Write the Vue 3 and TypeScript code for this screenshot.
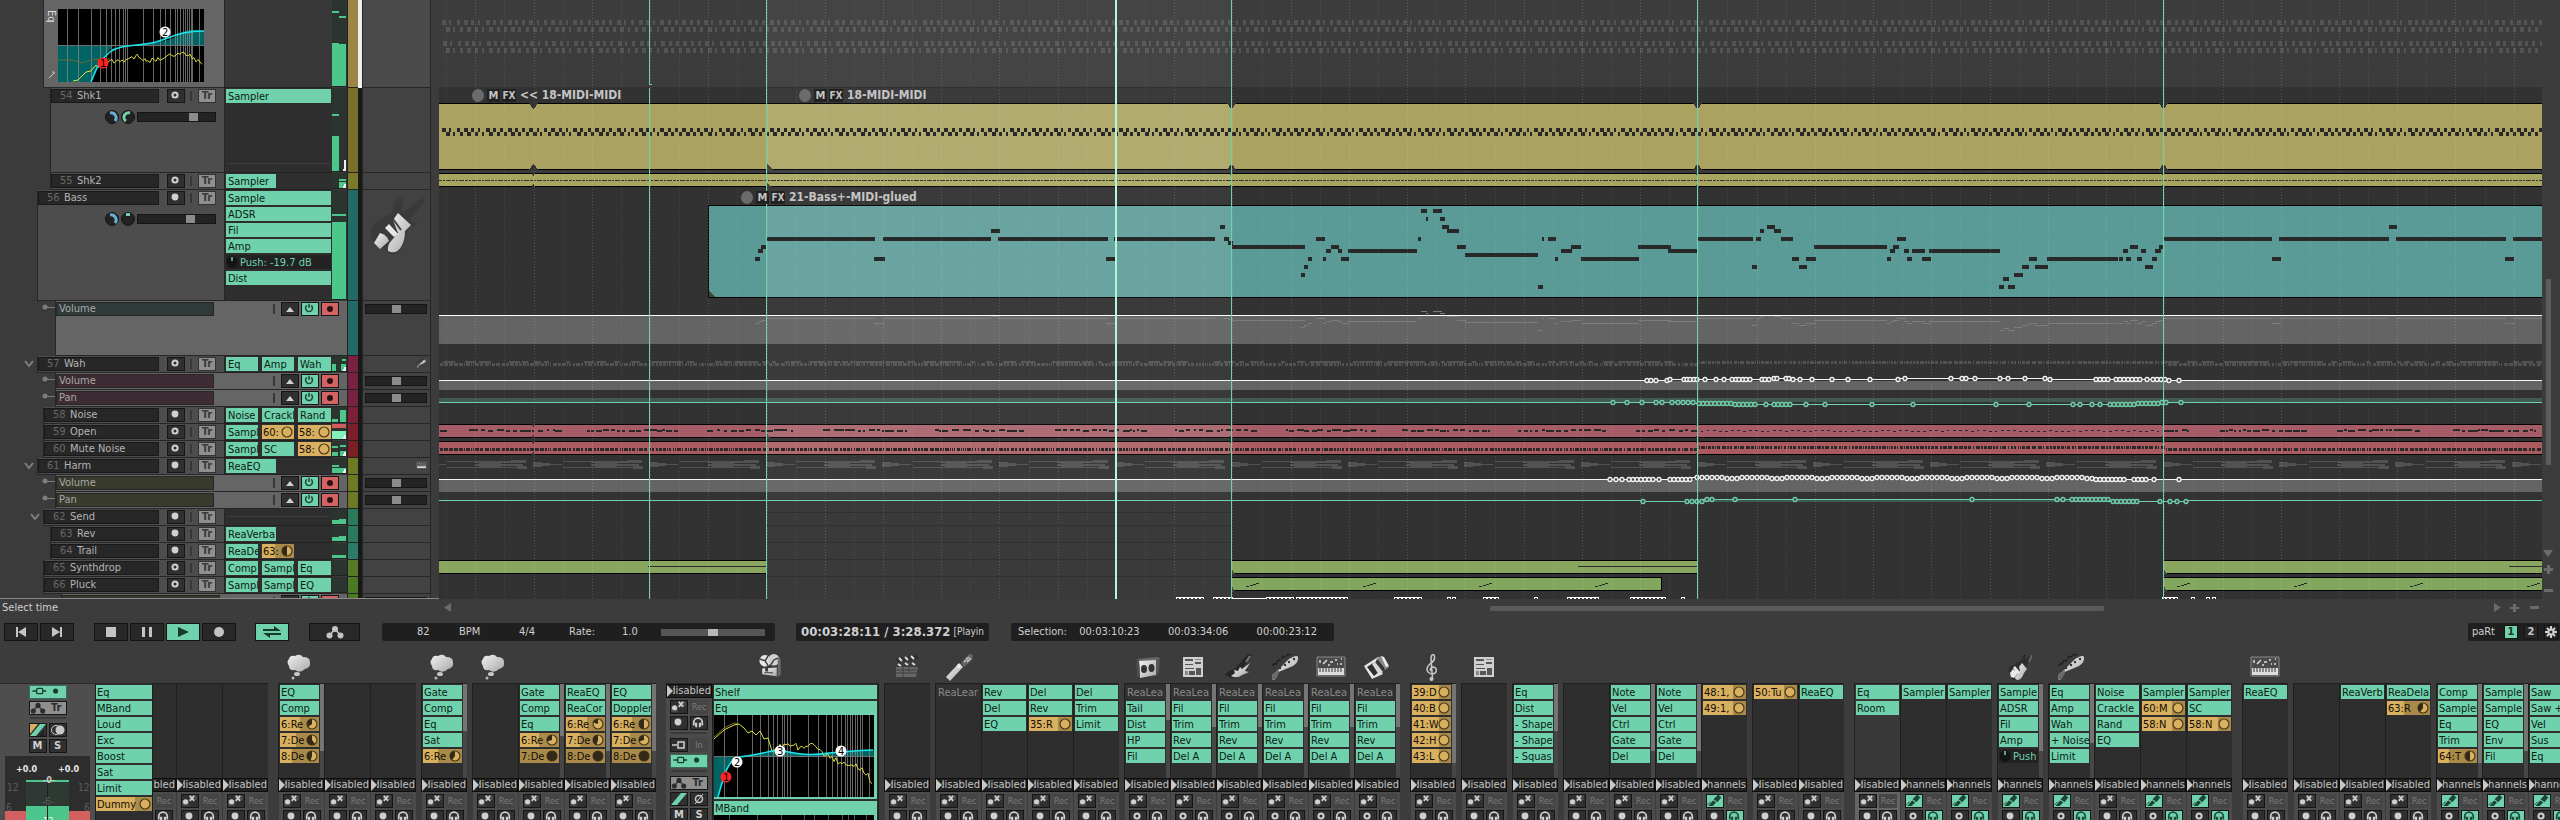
<script setup lang="ts">
type Slider = number

interface Track {
  kind: 'track' | 'env' | 'eq'
  h: number
  indent: number
  num?: string
  name: string
  armed?: boolean
  color: string
  tint?: string
  chips?: string[]
  cols?: 1 | 2 | 3
  vol?: Slider
  pan?: 'left' | 'centre'
  chevron?: boolean
  meter?: number[][]
  icon?: string
  divider?: boolean
}

interface Strip {
  fx: string[]
  icon?: string
  scroll?: number
  live?: boolean
  open?: boolean
  mon?: boolean
  selected?: boolean
}

interface Group {
  wide?: boolean
  clipped?: boolean
  strips: Strip[]
}

const T0 = 439
const SPAN = 2103

const tracks: Track[] = [
  { kind: 'eq', h: 88, indent: 43, name: 'Eq', color: '#9c8646', meter: [[0, 7, 43, 45], [7, 7, 44, 43], [0, 7, 11, 2], [7, 7, 16, 2]], divider: true },
  { kind: 'track', h: 85, indent: 50, num: '54', name: 'Shk1', color: '#7a7029', chips: ['Sampler'], cols: 1, vol: 75, pan: 'left', meter: [[0, 7, 48, 36], [0, 7, 26, 2]], divider: true },
  { kind: 'track', h: 17, indent: 50, num: '55', name: 'Shk2', color: '#7a7a2a', chips: ['Sampler'], cols: 2, meter: [[7, 7, 6, 2], [7, 7, 9, 7]] },
  { kind: 'track', h: 111, indent: 37, num: '56', name: 'Bass', armed: true, color: '#216a66', chips: ['Sample', 'ADSR', 'Fil', 'Amp', '*Push: -19.7 dB', 'Dist'], cols: 1, vol: 70, pan: 'centre', meter: [[0, 14, 24, 2], [0, 14, 32, 78]], icon: 'bass' },
  { kind: 'env', h: 55, indent: 55, name: 'Volume', color: '#216a66', tint: '#2e3a3a' },
  { kind: 'track', h: 17, indent: 37, num: '57', name: 'Wah', color: '#7a2042', chips: ['Eq', 'Amp', 'Wah'], cols: 3, chevron: true, meter: [[0, 4, 8, 8], [10, 4, 3, 2], [9, 5, 8, 8]], icon: 'neck' },
  { kind: 'env', h: 17, indent: 55, name: 'Volume', color: '#7a2042', tint: '#3d2c33' },
  { kind: 'env', h: 17, indent: 55, name: 'Pan', color: '#7a2042', tint: '#3d2c33' },
  { kind: 'track', h: 17, indent: 43, num: '58', name: 'Noise', armed: true, color: '#7a2038', chips: ['Noise', 'Crackl', 'Rand'], cols: 3, meter: [[0, 6, 12, 4], [8, 6, 3, 13]] },
  { kind: 'track', h: 17, indent: 43, num: '59', name: 'Open', color: '#7a202c', chips: ['Sampl', '!60:|100|100', '!58:|100|100'], cols: 3, meter: [[0, 14, 7, 9]] },
  { kind: 'track', h: 17, indent: 43, num: '60', name: 'Mute Noise', color: '#7a2024', chips: ['Sampl', 'SC', '!58:|100|100'], cols: 3, meter: [[0, 6, 5, 2], [8, 6, 4, 2], [0, 6, 11, 5], [8, 6, 10, 6]] },
  { kind: 'track', h: 17, indent: 37, num: '61', name: 'Harm', armed: true, color: '#6e7a22', chips: ['ReaEQ'], cols: 2, chevron: true, meter: [[0, 7, 7, 2], [0, 14, 10, 6]], icon: 'keys' },
  { kind: 'env', h: 17, indent: 55, name: 'Volume', color: '#6e7a22', tint: '#383a2c' },
  { kind: 'env', h: 17, indent: 55, name: 'Pan', color: '#6e7a22', tint: '#383a2c' },
  { kind: 'track', h: 17, indent: 43, num: '62', name: 'Send', armed: true, color: '#2a7a5a', chips: [], cols: 2, chevron: true, meter: [[0, 7, 11, 5], [7, 7, 10, 6]], divider: true },
  { kind: 'track', h: 17, indent: 50, num: '63', name: 'Rev', armed: true, color: '#2a7a60', chips: ['ReaVerba'], cols: 2, meter: [[0, 7, 11, 5], [7, 7, 10, 6]] },
  { kind: 'track', h: 17, indent: 50, num: '64', name: 'Trail', armed: true, color: '#2c7a68', chips: ['ReaDe', '!63:|40|50'], cols: 3, meter: [[0, 14, 12, 4]] },
  { kind: 'track', h: 17, indent: 43, num: '65', name: 'Synthdrop', color: '#567a24', chips: ['Comp', 'Sampl', 'Eq'], cols: 3, meter: [] },
  { kind: 'track', h: 17, indent: 43, num: '66', name: 'Pluck', color: '#4c7a22', chips: ['Sampl', 'Sampl', 'EQ'], cols: 3, meter: [] },
  { kind: 'env', h: 5, indent: 61, name: '', color: '#4c7a22', tint: '#383a2c' },
]

const range = (a: number, b: number, step: number): number[] => {
  const out: number[] = []
  for (let v = a; v <= b; v += step) out.push(v)
  return out
}

const rect = (x: number, y: number, w: number, h: number) => `M${x.toFixed(1)} ${y}h${w}v${h}h${-w}z`

let seed = 7
const rnd = () => {
  seed = (seed * 1103515245 + 12345) % 2147483648
  return seed / 2147483648
}

/* beat grid */
const BEAT = 29.12
const ORIGIN = 766.5
const beats = Array.from({ length: 73 }, (_, i) => ({ x: Math.round(ORIGIN + (i - 11) * BEAT), strong: i % 2 === 1 }))

/* shaker hits, four per beat */
let shaker = ''
let shakerGhost = ''
for (let x = 440, i = 0; x < 2540; x += BEAT / 4, i++) {
  const w = i % 3 === 0 ? 4 : i % 4 === 1 ? 2 : 3
  shaker += rect(x + 2, 128, w, 4) + rect(x + 5.6, 132, w, 4)
  shakerGhost += rect(x + 2, 20, w, 5) + rect(x + 5.6, 27, w, 5) + rect(x + 3, 41, w, 5) + rect(x + 5.6, 48, w, 5)
}

/* bass line: x, width, y */
const bass: number[][] = [
  [755, 5, 257], [758, 5, 249], [761, 5, 245], [767, 108, 237], [874, 11, 257], [883, 108, 237], [991, 9, 229],
  [998, 110, 237], [1106, 9, 257], [1114, 101, 237], [1220, 5, 225], [1224, 5, 237], [1228, 5, 241], [1232, 73, 245],
  [1301, 4, 273], [1304, 4, 265], [1308, 4, 257], [1316, 9, 237], [1323, 3, 257], [1326, 5, 249], [1331, 8, 245],
  [1338, 4, 249], [1341, 8, 257], [1348, 69, 249], [1418, 3, 237], [1421, 6, 209], [1426, 2, 217], [1433, 9, 209],
  [1440, 5, 217], [1442, 7, 225], [1447, 12, 229], [1457, 9, 245], [1465, 73, 253], [1538, 5, 285], [1542, 2, 237],
  [1548, 8, 237], [1555, 3, 257], [1561, 11, 249], [1571, 10, 245], [1581, 58, 257], [1638, 33, 245], [1668, 29, 249],
  [1698, 55, 237], [1752, 5, 265], [1756, 5, 237], [1760, 4, 229], [1767, 8, 225], [1774, 7, 229], [1781, 12, 237],
  [1792, 7, 257], [1799, 8, 265], [1806, 10, 257], [1814, 73, 245], [1887, 4, 257], [1890, 5, 249], [1893, 6, 245],
  [1897, 9, 237], [1904, 5, 249], [1907, 5, 257], [1912, 13, 249], [1922, 9, 257], [1929, 71, 249], [1999, 5, 285],
  [2003, 6, 277], [2008, 7, 285], [2014, 9, 273], [2022, 7, 265], [2029, 8, 257], [2035, 13, 265], [2047, 71, 257],
  [2119, 4, 257], [2123, 5, 249], [2126, 5, 257], [2130, 8, 245], [2137, 5, 257], [2141, 5, 249], [2145, 8, 265],
  [2152, 5, 257], [2155, 6, 249], [2159, 5, 245], [2164, 108, 237], [2272, 9, 257], [2279, 110, 237], [2389, 8, 225],
  [2396, 110, 237], [2505, 9, 257], [2513, 29, 237],
]
const bassPath = bass.map(([x, w, y]) => rect(x, y, w, 4)).join('')
const bassGhost = bass.map(([x, w, y]) => rect(x, 318 + Math.round((y - 237) / 4), w, 1)).join('')

/* wah, open and mute-noise patterns */
let wahGhost = ''
let muteNotes = ''
for (let x = 440; x < 2540;) {
  const w = 1 + Math.floor(rnd() * 4)
  const mid = x > 1697 && x < 2163
  wahGhost += rect(x, mid ? 361 : 363, w, 3)
  if (!mid && rnd() > 0.5) wahGhost += rect(x - 1, 361, w + 3, 2)
  muteNotes += rect(x, mid ? 446 : 448, w, 3)
  x += w + 1 + (rnd() > 0.75 ? 1 : 0)
}
let openNotes = ''
for (let x = 440; x < 2540;) {
  const w = 2 + Math.floor(rnd() * 6)
  const phase = (x - 1173 + 1170) % 116.5
  if (x > 1697 && x < 2163) {
    openNotes += rect(x, 430 + Math.floor(rnd() * 2), Math.min(w, 3), 1)
    x += 6
  } else {
    if (phase < 90) openNotes += rect(x, rnd() > 0.5 ? 429 : 430, w, 2)
    x += w + Math.floor(rnd() * 5)
  }
}
let harmGhost = ''
for (let x = 475 - 116.5; x < 2540; x += 116.4) {
  harmGhost += rect(x - 28, 461, 28, 1) + rect(x - 28, 467, 28, 1) + rect(x, 461, 44, 2) + rect(x, 464, 48, 2)
  harmGhost += rect(x, 467, 44, 1) + rect(x + 4, 462, 22, 5) + rect(x + 36, 460, 15, 3) + rect(x + 42, 466, 10, 3)
  harmGhost += rect(x + 58, 462, 9, 5) + rect(x + 62, 463, 13, 3) + rect(x + 66, 464, 21, 1)
}

/* automation points */
const at = (xs: number[], y: number) => xs.map((x) => [x, y])
const vol57 = [
  ...at([1647, 1651, 1656, 1667], 380),
  ...at([1670, 1684, 1687, 1690, 1694, 1697, 1705, 1716, 1724, 1732, 1736, 1739, 1743, 1746, 1750, 1762, 1765, 1769], 379),
  ...at([1774, 1777, 1786, 1789], 378), ...at([1793, 1800, 1812, 1832, 1848, 1870, 1898], 379),
  ...at([1905, 1951, 1962, 1966, 1975, 2000, 2008, 2025, 2045], 378),
  ...at([2050, 2096, 2100, 2104, 2108, ...range(2116, 2141, 4), 2147, ...range(2153, 2165, 4)], 379),
  ...at([2169, 2179], 380),
]
const pan57 = [
  ...at([1613, 1627, 1642, 1656, 1662, 1672, ...range(1678, 1696, 5)], 402), ...at(range(1699, 1732, 4), 403),
  ...at([...range(1735, 1757, 4), 1766, ...range(1774, 1791, 4), 1806, 1825, 1872, 1913, 1996, 2029, 2073, 2080, 2092, 2100, ...range(2110, 2134, 4)], 404),
  ...at(range(2138, 2158, 4), 403), ...at([2162, 2166, 2181], 402),
]
const vol61 = [
  ...at([1610, 1616, 1622, ...range(1629, 1653, 4), 1659, ...range(1670, 1693, 4)], 479),
  ...range(1697, 2092, 5).map((x, i) => [x, i % 9 < 6 ? 477 : 478]),
  ...at([...range(2096, 2120, 4), 2124, ...range(2134, 2148, 4), 2154, 2179], 479),
]
const pan61 = [
  ...at([1643, ...range(1687, 1702, 5)], 501), ...at([1707, 1712, 1735, 1795, 1972, 2057, 2063, ...range(2072, 2110, 4)], 499),
  ...at([...range(2113, 2138, 4), 2160, 2170, 2177, 2186], 501),
]
const line = (pts: number[][], base: number) =>
  `M439 ${base}.5H${pts[0][0]}` + pts.map(([x, y]) => `V${y}.5H${x}`).join('') + `V${base}.5H2542`
const envelopes = [
  { pts: vol57, d: line(vol57, 380), color: '#f4f4f4' },
  { pts: pan57, d: line(pan57, 402), color: '#6fd0ac' },
  { pts: vol61, d: line(vol61, 479), color: '#f4f4f4' },
  { pts: pan61, d: line(pan61, 500), color: '#6fd0ac' },
]
const tailPoints = [
  ...range(1178, 1202, 4), ...range(1215, 1231, 4), ...range(1268, 1292, 4), ...range(1298, 1346, 4), ...range(1396, 1422, 4),
  1449, 1454, ...range(1485, 1500, 4), 1536, ...range(1569, 1600, 4), ...range(1632, 1664, 4), 1683, ...range(2164, 2176, 4), 2193, 2208, 2214,
]

const pluck: string = [1246, 1363, 1479, 1595, 2177, 2294, 2410, 2527]
  .map((x) => rect(x, 586, 3, 1) + rect(x + 4, 585, 3, 1) + rect(x + 7, 584, 3, 1) + rect(x + 10, 583, 3, 1)).join('')

const markers = [533.5, 1231.5, 1697.5, 2163.5]
const notches = markers.map((x) => `M${x - 5} 103h10l-5 6zM${x - 5} 170h10l-5-6z`).join('')
const smallNotches = markers
  .map((x) => `M${x - 2} 173h4l-2 3zM${x - 2} 187h4l-2-3zM${x - 2} 424h4l-2 3zM${x - 2} 438h4l-2-3zM${x - 2} 441h4l-2 3zM${x - 2} 455h4l-2-3z`).join('')

const labels = [
  { x: 472, y: 88, text: '<< 18-MIDI-MIDI' },
  { x: 799, y: 88, text: '18-MIDI-MIDI' },
  { x: 741, y: 190, text: '21-Bass+-MIDI-glued' },
]
const pct = (x: number) => `${((x - T0) / SPAN) * 100}%`

const eqSmallGrid = [9, 20, 33, 42, 48, 53, 57, 61, 65, 67, 69, 85, 95, 102, 107, 112, 117, 119, 122, 125, 127, 129, 131, 133, 134, 141]
const eqGrid = [10, 23, 38, 46, 54, 59, 63, 68, 70, 73, 76, 94, 104, 112, 118, 123, 127, 131, 133, 136, 138, 141, 143, 146, 148, 155]
const jitter = (from: number[][], amp: number) => {
  const pts: string[] = []
  for (let i = 0; i < from.length - 1; i++) {
    const [x0, y0] = from[i]
    const [x1, y1] = from[i + 1]
    for (let x = x0; x < x1; x += 2) pts.push(`${x},${(y0 + ((y1 - y0) * (x - x0)) / (x1 - x0) + (rnd() - 0.5) * amp).toFixed(1)}`)
  }
  return pts.join(' ')
}
const spectrumSmall = jitter([[36, 58], [44, 57], [52, 52], [70, 51], [79, 46], [88, 52], [104, 50], [120, 44], [128, 45], [136, 50], [146, 54]], 5)
const spectrum = jitter([[58, 36], [66, 32], [76, 30], [82, 27], [84, 34], [98, 31], [112, 40], [124, 46], [138, 49], [152, 58], [159, 69]], 6)

/* chips: "!" send with fill and knob level, "~" offline, "*" parameter */
const chipKind = (c: string) => (c[0] === '!' ? 'send' : c[0] === '~' ? 'off' : c[0] === '*' ? 'param' : 'fx')
const chipText = (c: string) => (chipKind(c) === 'fx' ? c : c.slice(1).split('|')[0])
const chipFill = (c: string) => c.split('|')[1] + '%'
const pie = (c: string) => {
  const v = Number(c.split('|')[2])
  if (v >= 100) return ''
  if (v <= 0) return 'M6 1a5 5 0 1 1 0 10a5 5 0 1 1 0-10z'
  const a = (v / 100) * Math.PI * 2
  const x = 6 + 5 * Math.sin(a)
  const y = 6 - 5 * Math.cos(a)
  return `M6 6V1A5 5 0 ${v < 50 ? 1 : 0} 0 ${x.toFixed(2)} ${y.toFixed(2)}z`
}

const masterFx = ['Eq', 'MBand', 'Loud', 'Exc', 'Boost', 'Sat', 'Limit', '!Dummy|70|100']
const groupsA: Group[] = [
  { clipped: true, strips: [{ fx: [] }, { fx: [] }, { fx: [] }] },
  { wide: true, strips: [{ fx: ['EQ', 'Comp', '!6:Re|50|65', '!7:De|40|40', '!8:De|30|55'], icon: 'cloud', scroll: 67 }, { fx: [] }, { fx: [] }] },
  { strips: [{ fx: ['Gate', 'Comp', 'Eq', 'Sat', '!6:Re|38|60'], icon: 'cloud', scroll: 47 }] },
  {
    strips: [
      { fx: [], icon: 'cloud' }, { fx: ['Gate', 'Comp', 'Eq', '!6:Re|48|70', '!7:De|0|0'], scroll: 52 },
      { fx: ['ReaEQ', 'ReaCor', '!6:Re|55|80', '!7:De|35|55', '!8:De|0|0'], scroll: 67 },
      { fx: ['EQ', 'Doppler', '!6:Re|50|50', '!7:De|45|70', '!8:De|0|0'], scroll: 67 },
    ],
  },
]
const synth = ['~ReaLea', 'Fil', 'Trim', 'Rev', 'Del A']
const groupsB: Group[] = [
  { strips: [{ fx: [], icon: 'clapper' }] },
  { strips: [{ fx: ['~ReaLear'], icon: 'mic' }, { fx: ['Rev', 'Del', 'EQ'] }, { fx: ['Del', 'Rev', '!35:R|68|100'] }, { fx: ['Del', 'Trim', 'Limit'] }] },
  {
    strips: [
      { fx: ['~ReaLea', 'Tail', 'Dist', 'HP', 'Fil'], icon: 'speaker', scroll: 36, open: true }, { fx: synth, icon: 'box', scroll: 43, open: true },
      { fx: synth, icon: 'guitar', scroll: 43, open: true }, { fx: synth, icon: 'neck', scroll: 43, open: true },
      { fx: synth, icon: 'keys', scroll: 43, open: true }, { fx: synth, icon: 'pads', scroll: 43, open: true },
    ],
  },
  { wide: true, strips: [{ fx: ['!39:D|70|100', '!40:B|70|100', '!41:W|70|100', '!42:H|70|100', '!43:L|70|100'], icon: 'clef', scroll: 79 }] },
  { strips: [{ fx: [], icon: 'box' }] },
  { strips: [{ fx: ['Eq', 'Dist', '- Shape', '- Shape', '- Squas'], scroll: 47 }] },
  {
    strips: [
      { fx: [] }, { fx: ['Note', 'Vel', 'Ctrl', 'Gate', 'Del'], scroll: 67 }, { fx: ['Note', 'Vel', 'Ctrl', 'Gate', 'Del'], scroll: 67 },
      { fx: ['!48:1,|70|100', '!49:1,|70|100'], live: true, mon: true },
    ],
  },
  { strips: [{ fx: ['!50:Tu|70|100'] }, { fx: ['ReaEQ'] }] },
  {
    wide: true,
    strips: [{ fx: ['Eq', 'Room'], selected: true }, { fx: ['Sampler'], live: true, open: true, mon: true }, { fx: ['Sampler'], live: true, open: true, mon: true }],
  },
  { strips: [{ fx: ['Sample', 'ADSR', 'Fil', 'Amp', '*Push'], icon: 'bassmini', scroll: 67, live: true, mon: true }] },
  {
    strips: [
      { fx: ['Eq', 'Amp', 'Wah', '+ Noise', 'Limit'], icon: 'neck', scroll: 59, live: true, open: true, mon: true },
      { fx: ['Noise', 'Crackle', 'Rand', 'EQ'] }, { fx: ['Sampler', '!60:M|70|100', '!58:N|70|100'], live: true, open: true, mon: true },
      { fx: ['Sampler', 'SC', '!58:N|70|100'], live: true, open: true, mon: true },
    ],
  },
  { wide: true, strips: [{ fx: ['ReaEQ'], icon: 'keys' }] },
  { strips: [{ fx: [] }, { fx: ['ReaVerb'] }, { fx: ['ReaDela', '!63:R|40|60'] }] },
  {
    strips: [
      { fx: ['Comp', 'Sampler', 'Eq', 'Trim', '!64:T|28|50'], scroll: 79, live: true, open: true, mon: true },
      { fx: ['Sample', 'Sample', 'EQ', 'Env', 'Fil'], scroll: 67, live: true, open: true, mon: true },
      { fx: ['Saw', 'Saw +', 'Vel', 'Sus', 'Eq'], live: true, open: true, mon: true },
    ],
  },
]
const mixer: { key: string; groups: Group[] }[] = [{ key: 'a', groups: groupsA }, { key: 'b', groups: groupsB }]
</script>

<template>
  <div class="daw">
    <svg class="defs" aria-hidden="true">
      <linearGradient id="silver" x1="0" y1="0" x2="1" y2="1"><stop offset="0" stop-color="#f2f2f2" /><stop offset="1" stop-color="#a8a8a8" /></linearGradient>
      <symbol id="io" viewBox="0 0 18 14"><path d="M0 7h9v7H0zM9 0h9v7H9z" fill="#4a4a4a" /><circle cx="5" cy="9" r="3" fill="#d0d0d0" /><path d="M10 2l5 6M15 2l-5 6" stroke="#d0d0d0" stroke-width="2" /></symbol>
      <symbol id="plug" viewBox="0 0 18 14"><path d="M3 14l5-6 3 2-4 4zM9 6l4 3 4-5-3-3zM1 13l4-4" fill="#1d4537" stroke="#1d4537" /></symbol>
      <symbol id="dot" viewBox="0 0 18 14"><circle cx="9" cy="7" r="4" fill="#d0d0d0" /></symbol>
      <symbol id="ring" viewBox="0 0 18 14"><circle cx="9" cy="7" r="3" fill="none" stroke="#d0d0d0" stroke-width="2.4" /></symbol>
      <symbol id="phones" viewBox="0 0 18 14"><path d="M4 11V7.500a5 5 0 0 1 10 0V11" fill="none" stroke="currentColor" stroke-width="2" /><path d="M5 8h3v5H6zM13 8h-3v5h2z" fill="currentColor" /></symbol>
      <symbol id="fxflow" viewBox="0 0 38 14"><path d="M2 7h5m7 0h4" stroke="#173d30" stroke-width="2" /><rect x="7" y="4" width="7" height="6" rx="1" fill="none" stroke="#173d30" stroke-width="1.500" /><circle cx="29" cy="7" r="3" fill="#173d30" /></symbol>
      <symbol id="nodes" viewBox="0 0 18 14"><path d="M3 11L9 4l6 7" fill="none" stroke="currentColor" stroke-width="1.500" /><circle cx="3.500" cy="10.500" r="3" /><circle cx="9" cy="4" r="3" /><circle cx="14.500" cy="10.500" r="3" /></symbol>
      <symbol id="power" viewBox="0 0 18 14"><path d="M9 2v5M6.500 4a4 4 0 1 0 5 0" fill="none" stroke="#1d4a3a" stroke-width="1.800" /></symbol>
      <symbol id="cloud" viewBox="0 0 32 30"><path d="M4 5Q5 1 10 2Q15-1 18 3Q25 3 25 8Q26 14 20 15Q15 20 10 16Q4 17 4 12Q1 8 4 5z" fill="url(#silver)" /><ellipse cx="12" cy="20" rx="3" ry="2" fill="#c8c8c8" /><circle cx="8" cy="24" r="1.500" fill="#b8b8b8" /></symbol>
      <symbol id="camera" viewBox="0 0 32 30"><circle cx="11" cy="7" r="6" fill="#e6e6e6" /><circle cx="20" cy="6" r="6" fill="#d0d0d0" /><path d="M11 7l-6-2M11 7l3 5M11 7l3-5M20 6l-3 5M20 6l5-2" stroke="#3c3c3c" stroke-width="1.500" /><path d="M8 15l15-1v9l-15-2z" fill="url(#silver)" /><path d="M11 14h3v4h-3zM10 19h9v1h-9z" fill="#3a3a3a" /><path d="M24 5l3 1v15l-3 3z" fill="#6a6a6a" /></symbol>
      <symbol id="clapper" viewBox="0 0 32 30"><path d="M5 5l22-4v4L6 8z" fill="#2e2e2e" /><path d="M8 4l3 3M14 3l3 3M20 2l3 3M7 10l3 2M14 9l3 2M21 9l3 2" stroke="#ddd" stroke-width="2" /><path d="M5 13h22l-2 10H5z" fill="#666" /><path d="M5 16h21M5 19h21M12 13v10M18 13v6" stroke="#404040" /></symbol>
      <symbol id="mic" viewBox="0 0 32 30"><path d="M4 23l13-14 4 4L8 27z" fill="url(#silver)" /><path d="M19 9l8-9 4 1-1 5-8 7z" fill="#666" /><path d="M22 8l5-5M25 8l4-4M24 4l3 3" stroke="#c0c0c0" stroke-width="1.500" /><circle cx="17" cy="12" r="2" fill="#eee" /></symbol>
      <symbol id="speaker" viewBox="0 0 32 30"><path d="M6 5l21-2 2 2-4 3-17-1z" fill="#6a6a6a" /><path d="M8 7l17-1v15L9 24z" fill="url(#silver)" /><path d="M25 6l4-2-1 14-3 4z" fill="#555" /><ellipse cx="13" cy="15" rx="3" ry="4" fill="#333" /><ellipse cx="20.500" cy="14" rx="3" ry="4" fill="#333" /><path d="M5 6l3 1 1 17-3-2z" fill="#4c4c4c" /></symbol>
      <symbol id="box" viewBox="0 0 32 30"><path d="M6 3h20v20H6z" fill="#d0d0d0" /><path d="M8 5h8v2H8zM18 8h6v2h-6zM8 10h8v1H8zM8 14h9v1H8zM12 17h6v4h-6zM19 14h5v7h-5z" fill="#555" /><path d="M18 5h6v1h-6zM8 17h3v4H8z" fill="#888" /></symbol>
      <symbol id="guitar" viewBox="0 0 32 30"><path d="M2 21q4-6 9-5L25 0l4 1-9 13q6 1 5 2l-7 4q-5 6-12 3z" fill="#262626" /><path d="M23 8l4-6" stroke="#777" stroke-width="2" /><path d="M8 22l4-3-1-3 4 1 2-4 2 2 8-6-5 8 4 1-7 3q-5 4-11 1z" fill="url(#silver)" /></symbol>
      <symbol id="neck" viewBox="0 0 32 30"><path d="M3 26q-1-6 4-8L20 5q8-5 9-2 1 5-5 9l-12 5q-4 1-5 7-1 2-4 2z" fill="url(#silver)" /><path d="M3 26q-1-6 4-8l3-2q0 6-4 9z" fill="#6a6a6a" /><path d="M8 9q0-4 4-2M13 5q0-4 4-2M18 2q1-3 4-1M4 12q0-3 4-2" fill="none" stroke="#1f1f1f" stroke-width="1.500" /><g fill="#333"><circle cx="11" cy="14" r="1.200" /><circle cx="16" cy="11" r="1.200" /><circle cx="20" cy="8" r="1.200" /><circle cx="25" cy="5" r="1.200" /></g></symbol>
      <symbol id="keys" viewBox="0 0 32 30"><path d="M2 3h28v19H2z" fill="#4a4a4a" stroke="#888" /><path d="M3 14h26v7H3z" fill="#ddd" /><path d="M5 14v4M8 14v4M11 14v4M14 14v4M17 14v4M20 14v4M23 14v4M26 14v4" stroke="#333" /><path d="M5 6v3M8 10l4-4M15 8h3M20 6h2M25 10h2M22 10h1M13 11h2M26 5h1" stroke="#ddd" stroke-width="1.500" /></symbol>
      <symbol id="pads" viewBox="0 0 32 30"><path d="M3 12l14-9 2 1-6 5 9 11-11 5z" fill="#e6e6e6" /><path d="M6 13l6-4 7 8-6 5z" fill="#2e2e2e" /><path d="M11 10l3-2 8 10-4 3z" fill="#d8d8d8" /><path d="M15 5l5-3 8 11-4 3z" fill="#8a8a8a" /><path d="M20 2l3 1 5 9-3 1z" fill="#eee" /><path d="M16 6l7 9" stroke="#333" stroke-width="2" /></symbol>
      <symbol id="clef" viewBox="0 0 32 30"><path d="M15.500 25L14 4q1-5 3-3 2 5-3 8-6 5-3 9 5 4 8 0 1-5-3-5-4 1-2 4" fill="none" stroke="#c8c8c8" stroke-width="1.500" /><circle cx="14.500" cy="25" r="2" fill="#c8c8c8" /></symbol>
      <symbol id="bassmini" viewBox="0 0 32 30"><path d="M5 17q-1-6 4-5L18 5q3-7 4-4l-1 5L27 0l2 1-7 11q1 3-1 5l-6 8-6 1z" fill="#2c2c2c" /><path d="M25 8l3-7" stroke="#666" stroke-width="2" /><path d="M15 13l3-4 5 6-3 4q-2 6-6 7-3 0-3-3l5-6z" fill="url(#silver)" /><path d="M9 14l2-2 5 6-2 2zM6 19l3-4 5 4-4 5-3-1z" fill="#e8e8e8" /></symbol>
      <symbol id="bass" viewBox="0 0 64 64"><path d="M6 44Q4 28 14 26L28 16q2-16 10-14 3 6-2 12l2 4L60 0v6L44 26q8 3 9 0-2 6-8 6l-4 6q-2 20-14 22z" fill="#3a3a3a" /><path d="M33 18L46 30 40 36Q40 46 36 52 31 60 23 56 22 50 27 45L33 38 28 25z" fill="url(#silver)" /><path d="M20 33l4-4 9 10-4 3z" fill="#e8e8e8" /><path d="M15 38Q22 40 24 46L15 54 9 48z" fill="url(#silver)" /><path d="M28 24l8 11" stroke="#404040" stroke-width="2" /></symbol>
    </svg>

    <main class="top">
      <section class="tcp">
        <div v-for="(t, i) in tracks" :key="i" class="row" :class="t.kind" :style="{ height: t.h + 'px' }">
          <div class="lead" :style="{ width: t.indent + 'px' }">
            <svg v-if="t.chevron" class="chev" width="10" height="8"><path d="M1 1l4 5 4-5" fill="none" stroke="#808080" stroke-width="2" /></svg>
            <svg v-if="t.kind === 'env' && t.h > 5" class="lane" width="13" height="7"><circle cx="3" cy="3" r="2.500" fill="#7d7d7d" /><path d="M4 3.500h9" stroke="#7d7d7d" /></svg>
          </div>

          <div v-if="t.kind === 'eq'" class="panel eqpanel">
            <div class="eqside"><span>Eq</span><svg width="7" height="8"><path d="M1 7l5-5M4 1h2v2" stroke="#ccc" fill="none" /></svg></div>
            <svg class="eqgraph" width="146" height="73">
              <rect width="146" height="73" fill="#000" />
              <path d="M0 36H56C46 46 38 60 33 73H0zM75 36Q110 34 120 26T146 22V36z" fill="#006464" />
              <path v-for="x in eqSmallGrid" :key="x" :d="`M${x}.5 0V73`" stroke="#8a8a8a" opacity=".75" />
              <path d="M0 36.500H146" stroke="#6e6e6e" />
              <path d="M0 51H14L24 54 33 51 52 50" fill="none" stroke="#6e6a30" />
              <polyline points="15,72 20,71 28,63 33,62 36,58" fill="none" stroke="#e0e040" />
              <polyline :points="spectrumSmall" fill="none" stroke="#d8d840" />
              <path d="M33 73C39 58 42 51 52 43C62 35 78 38 98 33C115 28 122 22 146 22" fill="none" stroke="#18e8ee" stroke-width="1.500" />
              <circle cx="45" cy="54" r="5.500" fill="#ff2222" /><circle cx="107" cy="23" r="5.500" fill="#fff" />
              <text x="42" y="58" class="n">1</text><text x="104" y="27" class="n">2</text>
            </svg>
          </div>

          <div v-else-if="t.kind === 'track'" class="panel">
            <div class="head">
              <label class="name"><span class="num">{{ t.num }}</span><input type="text" :value="t.name" :aria-label="'Track ' + t.num + ' name'" /></label>
              <button class="sq" aria-label="Record arm"><svg width="16" height="12" viewBox="1 1 16 12"><use :href="t.armed ? '#dot' : '#ring'" /></svg></button>
              <i class="tick"></i>
              <button class="sq tr">Tr</button>
            </div>
            <div v-if="t.vol" class="knobs">
              <svg width="14" height="14"><circle cx="7" cy="7" r="6.500" fill="#222" stroke="#151515" /><path d="M5 3a5 5 0 0 1 5 8" fill="none" stroke="#6aaed6" stroke-width="3" /></svg>
              <svg width="14" height="14"><circle cx="7" cy="7" r="6.500" fill="#222" stroke="#151515" /><path v-if="t.pan === 'left'" d="M9 3a4.500 4.500 0 0 0-4 8" fill="none" stroke="#70d2ac" stroke-width="3" /><path v-else d="M5 1h4v3H5z" fill="#70d2ac" /></svg>
              <input class="slide" type="range" min="0" max="100" :value="t.vol" :aria-label="t.name + ' volume'" />
            </div>
          </div>

          <div v-else class="panel envpanel">
            <div class="head">
              <button class="envname" :style="{ background: t.tint }">{{ t.name }}</button>
              <i class="tick"></i>
              <button class="sq" aria-label="Mode"><svg width="16" height="12"><path d="M8 4l4 5H4z" fill="#d0d0d0" /></svg></button>
              <button class="sq on" aria-label="Active"><svg width="16" height="12" viewBox="1 1 16 12"><use href="#power" /></svg></button>
              <button class="sq red" aria-label="Arm"><svg width="16" height="12"><circle cx="8" cy="6" r="3" fill="#2a1212" /></svg></button>
            </div>
          </div>

          <div v-if="t.kind !== 'env'" class="fxcol" :class="'cols' + (t.cols || 1)">
            <template v-for="(c, k) in t.chips" :key="k">
              <button class="chip" :class="chipKind(c)">
                <i v-if="chipKind(c) === 'send'" class="fill" :style="{ width: chipFill(c) }"></i>
                <svg v-if="chipKind(c) === 'param'" class="pk" width="13" height="12"><circle cx="6" cy="6" r="5.500" fill="#141414" /><path d="M6 1v4" stroke="#70d2ac" stroke-width="1.500" /></svg>
                <span>{{ chipText(c) }}</span>
                <svg v-if="chipKind(c) === 'send'" class="sk" width="12" height="12"><circle cx="6" cy="6" r="5" fill="#d8b05f" stroke="#4a3a1a" stroke-width="1.200" /><path :d="pie(c)" fill="#33291a" /></svg>
              </button>
            </template>
            <hr v-if="t.divider" />
          </div>
          <svg v-if="t.kind !== 'env'" class="meter" width="15" :height="t.h - 1">
            <rect v-for="(m, k) in t.meter" :key="k" :x="m[0]" :y="m[2]" :width="m[1]" :height="m[3]" :fill="t.num === '59' ? '#82f2b8' : '#4cc68a'" />
            <rect v-if="t.num === '59'" width="14" height="4" fill="#d45c5c" />
            <path v-if="t.num && ['54', '55', '57', '59', '60', '61'].includes(t.num)" :d="`M11 ${t.h - 1}v-3h1v-${t.h > 20 ? 9 : 2}h2v${t.h > 20 ? 12 : 5}z`" fill="#f0f0f0" />
          </svg>
          <div class="stripe" :style="{ background: t.color }"></div>
          <div class="bar" :class="{ lit: t.kind === 'eq' }"></div>
          <div class="pic">
            <input v-if="t.kind === 'env'" class="slide env" type="range" min="0" max="100" value="50" :aria-label="t.name + ' amount'" />
            <svg v-else-if="t.icon && t.h > 20" width="64" height="64"><use :href="'#' + t.icon" /></svg>
            <svg v-else-if="t.icon" class="tiny" width="11" height="10"><use :href="'#' + t.icon" /></svg>
          </div>
        </div>
      </section>

      <section class="arrange">
        <svg class="canvas" viewBox="439 0 2103 599" preserveAspectRatio="none" shape-rendering="crispEdges">
          <rect x="439" y="0" width="2103" height="599" fill="#323232" />
          <rect x="439" y="0" width="2103" height="87" fill="#3c3c3c" />
          <rect x="439" y="170" width="2103" height="3" fill="#3a3a3a" />
          <path :d="shakerGhost" fill="#545454" />
          <g>
            <rect x="439" y="315" width="2103" height="29" fill="#646464" />
            <rect x="439" y="381" width="2103" height="9" fill="#646464" />
            <rect x="439" y="398" width="2103" height="4" fill="#42594f" />
            <rect x="439" y="480" width="2103" height="12" fill="#646464" />
            <rect x="1700" y="500" width="420" height="2" fill="#42594f" />
          </g>
          <path :d="bassGhost" fill="#7c7c7c" />
          <path :d="wahGhost + harmGhost" fill="#525252" />
          <g stroke="#000">
            <path d="M438 103.500H2543V169.500H438z" fill="#aba261" />
            <path d="M438 173.500H2543V186.500H438z" fill="#a8a65e" />
            <path d="M708.500 205.500H2543V297.500H708.500z" fill="#5a9b98" />
            <path d="M438 424.500H2543V437.500H438z" fill="#a65c67" />
            <path d="M438 441.500H2543V454.500H438z" fill="#aa5b60" />
            <path d="M438 560.500H766V573.500H438zM1231.500 560.500H1697V573.500H1231.500zM2163.500 560.500H2543V573.500H2163.500z" fill="#89a55e" />
            <path d="M1231.500 577.500H1661.500V590.500H1231.500zM2163.500 577.500H2543V590.500H2163.500z" fill="#82a65e" />
          </g>
          <rect x="767" y="0" width="464" height="599" fill="#fff" fill-opacity=".045" />
          <path d="M767 104H1231V169H767zM767 174H1231V186H767zM767 206H1231V297H767zM767 425H1231V437H767zM767 442H1231V454H767z" fill="#fff" fill-opacity=".06" />
          <path :d="shaker + bassPath + openNotes + muteNotes + pluck" fill="#282828" />
          <path d="M439 180.500H2542" stroke="#333" stroke-dasharray="3 1 2 1 5 1" />
          <path d="M648 566.500H766M1578 566.500H1697M2509 566.500H2542" stroke="#2c2c2c" />
          <path :d="notches + smallNotches" fill="#333" />
          <path d="M767 163l6 7h-6zM709 290l6 7h-6zM767 182l4 5h-4zM1232 569l3 5h-3zM1232 586l3 5h-3zM2164 569l3 5h-3zM2164 586l3 5h-3zM767 433l3 5h-3z" fill="#3c4a38" />
          <path v-for="b in beats" :key="b.x" :d="`M${b.x}.5 0V599`" stroke="#fff" :stroke-opacity="b.strong ? 0.17 : 0.1" stroke-dasharray="1 2" />
          <path d="M439 315.500H2542" stroke="#fff" />
          <g v-for="(e, i) in envelopes" :key="i" fill="none" :stroke="e.color">
            <path :d="e.d" />
            <circle v-for="(p, k) in e.pts" :key="k" :cx="p[0]" :cy="p[1] + 0.5" r="2" fill="#454545" stroke-width="1.300" shape-rendering="auto" />
          </g>
          <path v-for="x in tailPoints" :key="x" :d="`M${x - 2} 598.500q2-3 4 0`" stroke="#fff" fill="none" />
          <path d="M1233 598.500H1266" stroke="#fff" />
          <path d="M766.500 87.500H1231M766.500 512.500H1231M766.500 525.500H1231M766.500 542.500H1231M766.500 559.500H1231M766.500 576.500H1231" stroke="#303030" />
          <path d="M649.500 0V84M649.500 88V599M766.500 0V599M1231.500 0V599M1697.500 0V599M2163.500 0V599" stroke="#70d2ac" />
          <path d="M649 84h3v1h-3z" fill="#70d2ac" />
          <path d="M1116 0V599" stroke="#b4f6dd" stroke-width="2" />
        </svg>
        <div v-for="l in labels" :key="l.x" class="clip" :style="{ left: pct(l.x), top: l.y + 'px' }">
          <i class="disc"></i><button>M</button><button>FX</button><span>{{ l.text }}</span>
        </div>
      </section>

      <aside class="vscroll">
        <i class="vthumb"></i>
        <svg width="12" height="50"><path d="M1 1h10L6 8zM5 16h3v3h3v3H8v3H5v-3H2v-3h3zM2 40h9v3H2z" fill="#6b6b6b" /></svg>
      </aside>
    </main>

    <div class="status">
      <span class="hint">Select time</span>
      <svg width="9" height="12"><path d="M8 1v9L1 5.500z" fill="#6b6b6b" /></svg>
      <div class="htrack"><i class="hthumb"></i></div>
      <svg width="50" height="12"><path d="M2 1v9l7-4.500zM21 2h3v3h3v2h-3v3h-3V7h-3V5h3zM38 4h9v3h-9z" fill="#6b6b6b" /></svg>
    </div>

    <div class="transport">
      <div class="btns">
        <button aria-label="Go to start"><svg width="18" height="14"><path d="M4 2h2v10H4zM14 2v10L6 7z" /></svg></button>
        <button aria-label="Go to end"><svg width="18" height="14"><path d="M12 2h2v10h-2zM4 2v10l8-5z" /></svg></button>
      </div>
      <div class="btns play">
        <button aria-label="Stop"><svg width="18" height="14"><path d="M4 2h10v10H4z" /></svg></button>
        <button aria-label="Pause"><svg width="18" height="14"><path d="M4 2h3v10H4zM11 2h3v10h-3z" /></svg></button>
        <button class="on" aria-label="Play"><svg width="18" height="14"><path d="M4 2v10l11-5z" /></svg></button>
        <button aria-label="Record"><svg width="18" height="14"><circle cx="9" cy="7" r="5" /></svg></button>
      </div>
      <button class="on" aria-label="Repeat"><svg width="20" height="14"><path d="M1 4h11V1l7 5H1zM19 10H8v3L1 8h18z" /></svg></button>
      <button class="auto" aria-label="Automation"><svg width="22" height="14" viewBox="0 0 18 14"><use href="#nodes" /></svg></button>
      <div class="box tempo">
        <span class="v82">82</span><span class="bpm">BPM</span><span class="sig">4/4</span><label class="rl" for="rate">Rate:</label><span class="rv">1.0</span>
        <input id="rate" class="slide rate" type="range" min="0" max="100" value="50" />
      </div>
      <div class="box time"><b>00:03:28:11 / 3:28.372</b><span>[Playin</span></div>
      <div class="box sel"><span>Selection:</span><span>00:03:10:23</span><span>00:03:34:06</span><span>00:00:23:12</span></div>
      <div class="box part"><span>paRt</span><button class="on">1</button><button>2</button>
        <button aria-label="Settings"><svg width="12" height="12"><g stroke="#d0d0d0" stroke-width="2"><path d="M6 0v12M0 6h12M2 2l8 8M10 2l-8 8" /></g><circle cx="6" cy="6" r="3.500" fill="#d0d0d0" /><circle cx="6" cy="6" r="1.500" fill="#222" /></svg></button>
      </div>
    </div>

    <section class="mixer">
      <div class="master">
        <div class="mctl">
          <button class="wide on" aria-label="Effects"><svg width="36" height="12" viewBox="1 1 36 12"><use href="#fxflow" /></svg></button>
          <button class="wide gray"><svg width="16" height="12" viewBox="0 0 18 14"><use href="#nodes" /></svg>Tr</button>
          <i class="sep"></i>
          <div class="pair">
            <button class="sq" aria-label="Route"><svg width="16" height="12"><path d="M0 0h8L0 10z" fill="#d8b05f" /><path d="M10 0h6L6 12H0z" fill="#70d2ac" /><path d="M14 6v6H9z" fill="#222" /></svg></button>
            <button class="sq" aria-label="Mono"><svg width="16" height="12"><circle cx="6" cy="6" r="4.500" fill="none" stroke="#c8c8c8" /><circle cx="10" cy="6" r="4.500" fill="#c8c8c8" /></svg></button>
          </div>
          <div class="pair"><button class="sq ms">M</button><button class="sq ms">S</button></div>
          <svg class="mmeter" width="85" height="65">
            <rect width="85" height="65" fill="#2d2d2d" /><rect x="21" y="24" width="43" height="32" fill="#2e3933" />
            <rect y="55" width="85" height="10" fill="#d26060" /><rect x="21" y="50" width="43" height="15" fill="#4cc68a" /><rect x="21" y="24" width="43" height="2" fill="#4cc68a" />
            <path d="M42.500 27V65" stroke="#1f1f1f" />
            <g class="mt"><text x="11" y="16">+0.0</text><text x="53" y="16">+0.0</text><text x="38" y="27" class="z">-0-</text></g>
            <g class="ms2"><text x="2" y="35">12</text><text x="73" y="35">12</text><text x="37" y="49">-6-</text><text x="1" y="55">6</text><text x="79" y="55">6</text></g>
            <text x="38" y="68" class="w">12</text>
          </svg>
        </div>
        <div class="mfx">
          <button v-for="c in masterFx" :key="c" class="chip" :class="chipKind(c)">
            <i v-if="chipKind(c) === 'send'" class="fill" :style="{ width: chipFill(c) }"></i><span>{{ chipText(c) }}</span>
            <svg v-if="chipKind(c) === 'send'" class="sk" width="12" height="12"><circle cx="6" cy="6" r="5" fill="#d8b05f" stroke="#4a3a1a" stroke-width="1.200" /></svg>
          </button>
        </div>
      </div>

      <template v-for="part in mixer" :key="part.key">
        <div v-if="part.key === 'b'" class="group special">
          <svg class="bigicon" width="32" height="30"><use href="#camera" /></svg>
          <div class="sbody">
            <div class="sleft">
              <button class="route"><svg width="6" height="12"><path d="M0 0l6 6-6 6z" fill="#c8c8c8" /></svg><span>disabled</span></button>
              <div class="pair first"><button class="sq" aria-label="Input"><svg width="16" height="12" viewBox="1 1 16 12"><use href="#io" /></svg></button><span class="rec">Rec</span></div>
              <div class="pair"><button class="sq" aria-label="Record arm"><svg width="16" height="12" viewBox="1 1 16 12"><use href="#dot" /></svg></button><button class="sq" aria-label="Monitor"><svg width="16" height="12" viewBox="1 1 16 12"><use href="#phones" /></svg></button></div>
              <i class="sep"></i>
              <div class="pair"><button class="sq" aria-label="Input effects"><svg width="16" height="12"><path d="M1 6h5M7 3h6v6H7z" stroke="#d0d0d0" stroke-width="1.500" fill="none" /></svg></button><span class="rec">In</span></div>
              <button class="wide on" aria-label="Effects"><svg width="36" height="12" viewBox="1 1 36 12"><use href="#fxflow" /></svg></button>
              <i class="sep"></i>
              <button class="wide gray"><svg width="16" height="12" viewBox="0 0 18 14"><use href="#nodes" /></svg>Tr</button>
              <div class="pair"><button class="sq" aria-label="Route"><svg width="16" height="12"><path d="M10 0h6L6 12H0z" fill="#70d2ac" /></svg></button><button class="sq" aria-label="Phase"><svg width="16" height="12"><circle cx="8" cy="6" r="3.500" fill="none" stroke="#c8c8c8" stroke-width="1.500" /><path d="M4 11l8-10" stroke="#c8c8c8" /></svg></button></div>
              <div class="pair"><button class="sq ms">M</button><button class="sq ms">S</button></div>
            </div>
            <div class="sright">
              <button class="chip fx"><span>Shelf</span></button>
              <div class="eqbox">
                <button class="chip fx"><span>Eq</span></button>
                <svg width="160" height="82">
                  <rect width="160" height="82" fill="#000" />
                  <path d="M0 41H26C14 44 10 60 4 82H0zM26 41C45 39 55 36 63 35C78 37 90 42 115 38C130 37 145 35 160 35V41z" fill="#006464" />
                  <path v-for="x in eqGrid" :key="x" :d="`M${x}.5 0V82`" stroke="#8a8a8a" opacity=".75" />
                  <path d="M0 41.500H160" stroke="#6e6e6e" />
                  <path d="M0 24L10 15 20 10 25 9 30 13 34 18 38 16 42 20 46 16 50 24 54 23 58 36" fill="none" stroke="#e0e040" />
                  <path d="M0 22L10 13 20 8 25 9" fill="none" stroke="#77742e" />
                  <polyline :points="spectrum" fill="none" stroke="#d8d840" />
                  <path d="M4 82C10 60 14 44 26 42C45 40 55 36 63 35C78 37 90 42 115 38C130 37 145 35 159 35" fill="none" stroke="#18e8ee" stroke-width="1.500" />
                  <circle cx="12" cy="62" r="5.500" fill="#ff2222" /><circle cx="23" cy="47" r="5.500" fill="#fff" /><circle cx="66" cy="36" r="5.500" fill="#fff" /><circle cx="127" cy="36" r="5.500" fill="#fff" />
                  <text x="9" y="66" class="n">1</text><text x="20" y="51" class="n">2</text><text x="63" y="40" class="n">3</text><text x="124" y="40" class="n">4</text>
                </svg>
              </div>
              <div class="eqbox last">
                <button class="chip fx"><span>MBand</span></button>
                <svg width="160" height="20"><rect width="160" height="20" fill="#000" /><path d="M15.500 0V20M43.500 0V20M114.500 0V20M140.500 0V20" stroke="#186a80" /><path d="M67.500 0V20M90.500 0V20M100.500 0V20M128.500 0V20M134.500 0V20M152.500 0V20" stroke="#555" /></svg>
              </div>
            </div>
          </div>
        </div>

        <div v-for="(g, gi) in part.groups" :key="part.key + gi" class="group" :class="{ wider: g.wide, clipped: g.clipped }">
          <div v-for="(s, si) in g.strips" :key="si" class="strip" :class="{ selected: s.selected }">
            <div class="ico"><svg v-if="s.icon" width="32" height="30"><use :href="'#' + s.icon" /></svg></div>
            <div class="slots">
              <div class="list">
                <button v-for="(c, k) in s.fx" :key="k" class="chip" :class="chipKind(c)">
                  <i v-if="chipKind(c) === 'send'" class="fill" :style="{ width: chipFill(c) }"></i>
                  <svg v-if="chipKind(c) === 'param'" class="pk" width="13" height="12"><circle cx="6" cy="6" r="5.500" fill="#141414" /><path d="M6 1v4" stroke="#70d2ac" stroke-width="1.500" /></svg>
                  <span>{{ chipText(c) }}</span>
                  <svg v-if="chipKind(c) === 'send'" class="sk" width="12" height="12"><circle cx="6" cy="6" r="5" fill="#d8b05f" stroke="#4a3a1a" stroke-width="1.200" /><path :d="pie(c)" fill="#33291a" /></svg>
                </button>
              </div>
              <div v-if="s.scroll" class="sbar"><i :style="{ height: s.scroll + 'px' }"></i></div>
            </div>
            <button class="route"><svg width="6" height="12"><path d="M0 0l6 6-6 6z" fill="#c8c8c8" /></svg><span>{{ s.live ? 'channels' : 'disabled' }}</span></button>
            <div class="ctl">
              <div class="pair"><button class="sq" :class="{ on: s.live }" aria-label="Input"><svg width="16" height="12" viewBox="1 1 16 12"><use :href="s.live ? '#plug' : '#io'" /></svg></button><span class="rec">Rec</span></div>
              <div class="pair"><button class="sq" aria-label="Record arm"><svg width="16" height="12" viewBox="1 1 16 12"><use :href="s.open ? '#ring' : '#dot'" /></svg></button><button class="sq" :class="{ on: s.mon }" aria-label="Monitor"><svg width="16" height="12" viewBox="1 1 16 12"><use href="#phones" /></svg></button></div>
            </div>
          </div>
        </div>
      </template>
    </section>
  </div>
</template>

<style>
body { margin: 0; background: #3c3c3c; overflow: hidden; }
</style>

<style scoped>
.daw { display: flex; flex-direction: column; height: 100vh; overflow: hidden; background: #3c3c3c; color: #d0d0d0; font: 11px/14px "DejaVu Sans Condensed", "Noto Sans", sans-serif; }
.daw *, .daw *::before { box-sizing: border-box; }
button, input { font: inherit; color: inherit; margin: 0; padding: 0; border: 0; border-radius: 0; background: none; }
svg { display: block; flex: none; }
.defs { position: absolute; width: 0; height: 0; }
.n { font-size: 11px; fill: #000; }
.top { display: flex; flex: none; }

.tcp { width: 439px; flex: none; height: 599px; overflow: hidden; border-bottom: 1px solid #8a8a8a; background: linear-gradient(90deg, #3b3b3b 430px, #262626 430px, #262626 431px, #3c3c3c 431px); }
.row { display: flex; width: 430px; overflow: hidden; }
.lead { flex: none; position: relative; }
.chev { position: absolute; right: 3px; top: 4px; }
.lane { position: absolute; right: 0; top: 3px; }
.panel { flex: 1; min-width: 0; background: #4d4d4d; border-left: 1px solid #262626; border-bottom: 1px solid #262626; padding-top: 1px; }
.envpanel { background: #656565; }
.head { display: flex; align-items: center; padding-right: 8px; }
.name { flex: 1; min-width: 0; display: flex; height: 14px; background: #272727; border: 1px solid #191919; margin-right: 8px; line-height: 12px; }
.name .num { width: 25px; padding-left: 8px; color: #686868; flex: none; }
.name input { flex: 1; min-width: 0; color: #b4b4b4; height: 12px; }
.sq { width: 18px; height: 14px; flex: none; border: 1px solid #161616; background: #303030; line-height: 12px; text-align: center; color: #d0d0d0; overflow: hidden; }
.sq.on { background: #70d2ac; color: #1d4a3a; }
.sq.red { background: #d46363; }
.sq.tr { background: #8f8f8f; color: #3a3a3a; font-weight: bold; border-color: #333; }
.tick { width: 2px; height: 10px; background: #383838; margin: 0 6px 0 5px; flex: none; }
.envname { width: 158px; height: 14px; border: 1px solid #262626; color: #a8a8a8; text-align: left; padding-left: 2px; line-height: 12px; margin-right: auto; }
.envpanel .sq + .sq { margin-left: 2px; }
.knobs { display: flex; justify-content: flex-end; align-items: center; gap: 2px; padding: 7px 8px 0 0; }
.slide { appearance: none; width: 79px; height: 10px; background: #242424; border: 1px solid #151515; display: block; }
.slide::-webkit-slider-thumb { appearance: none; width: 9px; height: 8px; background: #8c8c8c; border: 0; border-radius: 0; }
.slide.env { width: 62px; margin-top: 3px; }
.slide.rate { width: 104px; height: 7px; background: #555; border: 0; }
.slide.rate::-webkit-slider-thumb { width: 10px; height: 7px; background: #b8b8b8; }

.eqpanel { background: #656565; display: flex; padding-top: 9px; }
.eqside { width: 14px; display: flex; flex-direction: column; align-items: center; justify-content: space-between; height: 70px; }
.eqside span { writing-mode: vertical-rl; color: #ddd; padding-top: 1px; }

.fxcol { width: 108px; flex: none; background: #2e2e2e; border-left: 1px solid #262626; border-bottom: 1px solid #222; padding: 1px 1px 0; display: grid; gap: 2px 4px; align-content: start; position: relative; }
.cols1 { grid-template-columns: 105px; }
.cols2 { grid-template-columns: 50px; }
.cols3 { grid-template-columns: 32px 32px 33px; }
.fxcol hr { position: absolute; left: 2px; right: 2px; bottom: 8px; margin: 0; border: 0; border-top: 1px solid #3c3c3c; }
.row.eq .fxcol { background: #383838; }
.chip { flex: none; height: 14px; width: 100%; line-height: 13px; text-align: left; overflow: hidden; white-space: nowrap; position: relative; padding: 0 0 0 2px; background: #70d2ac; color: #0c1c16; display: flex; align-items: center; }
.chip span { position: relative; overflow: hidden; flex: 0 1 auto; }
.mixer .chip { padding-left: 1px; }
.daw .chip.send { background: #a98a48; color: #120d04; justify-content: space-between; padding: 0 1px; }
.chip.send span { flex: 1 1 0; min-width: 0; }
.chip.off { background: #323232; color: #888; }
.daw .chip.param { background: #222; color: #70d2ac; padding: 0; gap: 1px; }
.fill { position: absolute; left: 0; top: 0; bottom: 0; background: #d8b05f; }
.sk { position: relative; }
.meter { background: #2c3430; border-bottom: 1px solid #222; }
.stripe { width: 11px; flex: none; border-left: 1px solid #222; border-bottom: 1px solid #222; }
.bar { width: 5px; flex: none; background: #191919; border-right: 1px solid #262626; }
.bar.lit { background: #f0f0f0; }
.pic { width: 67px; flex: none; background: #424242; border-bottom: 1px solid #262626; padding-left: 2px; display: flex; align-items: flex-start; }
.row.eq .pic { background: #4a4a4a; }
.pic svg { margin-top: 5px; }
.pic svg.tiny { margin: 3px 3px 0 auto; }

.arrange { flex: 1; min-width: 0; position: relative; height: 599px; }
.canvas { width: 100%; height: 599px; }
.clip { position: absolute; display: flex; align-items: center; gap: 2px; height: 14px; font-weight: bold; font-size: 12px; white-space: nowrap; color: #c4c4c4; }
.clip .disc { width: 12px; height: 13px; border-radius: 50%; background: #6b6b6b; margin-right: 1px; }
.clip button { width: 13px; height: 13px; line-height: 13px; background: #222; font-size: 11px; font-weight: bold; text-align: center; color: #c4c4c4; }
.clip button + button { width: 14px; font-size: 10px; }
.clip span { margin-left: 2px; }
.vscroll { width: 18px; flex: none; display: flex; flex-direction: column; align-items: center; justify-content: space-between; padding: 279px 6px 0 0; }
.vthumb { width: 5px; height: 186px; background: #5c5c5c; border-radius: 1px; }

.status { display: flex; align-items: center; height: 18px; flex: none; padding-right: 18px; }
.hint { width: 443px; padding-left: 2px; }
.htrack { flex: 1; height: 5px; display: flex; }
.htrack::before { content: ""; flex: 1037; }
.htrack::after { content: ""; flex: 388; }
.hthumb { flex: 614; height: 5px; background: #5a5a5a; border-radius: 1px; }

.transport { display: flex; height: 28px; flex: none; padding: 6px 0 0 4px; align-items: flex-start; }
.transport button { width: 34px; height: 18px; background: #282828; border: 1px solid #141414; display: flex; align-items: center; justify-content: center; fill: #c4c4c4; color: #c4c4c4; }
.transport button.on { background: #70d2ac; fill: #17382c; color: #17382c; }
.btns { display: flex; gap: 2px; margin-right: 20px; }
.btns.play { margin-right: 19px; }
.transport .auto { width: 51px; margin: 0 22px 0 20px; }
.box { background: #1f1f1f; height: 18px; border-radius: 2px; display: flex; align-items: center; flex: none; white-space: nowrap; }
.tempo { width: 393px; margin-right: 21px; padding-right: 10px; }
.v82 { margin-left: 35px; width: 42px; }
.bpm { width: 60px; }
.sig { width: 50px; }
.rl { width: 53px; }
.rv { flex: 1; }
.time { width: 193px; padding: 0 0 0 5px; margin-right: 22px; }
.time b { font-size: 13px; }
.time span { font-size: 10px; margin-left: 3px; }
.sel { width: 323px; padding: 0 17px 0 7px; justify-content: space-between; }
.sel span:first-child { margin-right: -16px; }
.part { margin-left: auto; padding: 0 2px 0 4px; gap: 6px; }
.part span { margin-right: 3px; }
.transport .part button { width: 14px; height: 14px; font-weight: bold; }

.mixer { flex: 1; min-height: 0; display: flex; overflow: hidden; align-items: stretch; }
.master { width: 153px; flex: none; margin-top: 38px; display: flex; border-top: 1px solid #2a2a2a; }
.mctl { width: 95px; background: #4e4e4e; display: flex; flex-direction: column; align-items: center; padding-top: 1px; gap: 2px; }
.mfx { flex: 1; background: #2e2e2e; border-left: 1px solid #1d1d1d; border-right: 1px solid #1d1d1d; padding: 1px 0 0; display: flex; flex-direction: column; gap: 2px; }
.wide { width: 38px; height: 14px; flex: none; border: 1px solid #161616; overflow: hidden; display: flex; align-items: center; justify-content: space-between; }
.wide.on { background: #70d2ac; border-color: #3c6a59; }
.wide.gray { background: #8f8f8f; color: #2c2c2c; fill: #2c2c2c; font-weight: bold; padding-right: 4px; line-height: 12px; }
.sep { width: 36px; height: 2px; margin: 0 0 2px; background: #3a3a3a; flex: none; }
.pair { display: flex; gap: 2px; flex: none; }
.sq.ms { font-weight: bold; font-size: 11px; }
.mmeter { margin-top: 1px; }
.mt { font-size: 9px; fill: #e8e8e8; font-weight: bold; }
.mt .z { fill: #c8c8c8; }
.ms2 { font-size: 10px; fill: #5c5c5c; }
.w { font-size: 9px; fill: #fff; }

.group { display: flex; flex: none; margin-left: 5px; }
.group.wider, .group.special { margin-left: 10px; }
.group.clipped { margin-left: 0; width: 115px; justify-content: flex-end; overflow: hidden; }
.strip { width: 46px; flex: none; display: flex; flex-direction: column; background: #4b4b4b; }
.ico { height: 38px; flex: none; background: #3c3c3c; display: flex; justify-content: center; padding-top: 9px; }
.slots { height: 95px; flex: none; background: #2e2e2e; border: 1px solid #1f1f1f; border-width: 1px 0 0 1px; display: flex; }
.selected .slots { background: #383838; }
.selected .ctl { background: #656565; }
.list { flex: 1; min-width: 0; padding: 1px 1px 0; display: flex; flex-direction: column; gap: 2px; }
.sbar { width: 4px; background: #474747; }
.sbar i { display: block; background: #757575; }
.route { display: flex; align-items: center; height: 14px; width: 100%; flex: none; background: #222; border: 1px solid #0e0e0e; overflow: hidden; color: #c4c4c4; }
.route span { flex: 1; min-width: 0; display: flex; justify-content: flex-end; overflow: hidden; line-height: 12px; }
.ctl { padding: 2px 0 0 4px; display: flex; flex-direction: column; gap: 2px; border-left: 1px solid #3c3c3c; }
.rec { width: 18px; height: 14px; background: #454545; color: #7c7c7c; font-size: 9px; text-align: center; }

.special { width: 213px; flex-direction: column; }
.bigicon { margin: 9px 0 0 88px; height: 29px; }
.sbody { display: flex; flex: 1; min-height: 0; background: #4b4b4b; border-top: 1px solid #262626; }
.sleft { width: 46px; flex: none; display: flex; flex-direction: column; align-items: center; gap: 2px; }
.sright { flex: 1; background: #2e2e2e; border-left: 1px solid #1d1d1d; border-right: 1px solid #1d1d1d; padding: 1px 1px 0; display: flex; flex-direction: column; gap: 2px; }
.eqbox { background: #70d2ac; padding-bottom: 2px; flex: none; }
.eqbox.last { padding: 0; }
</style>
